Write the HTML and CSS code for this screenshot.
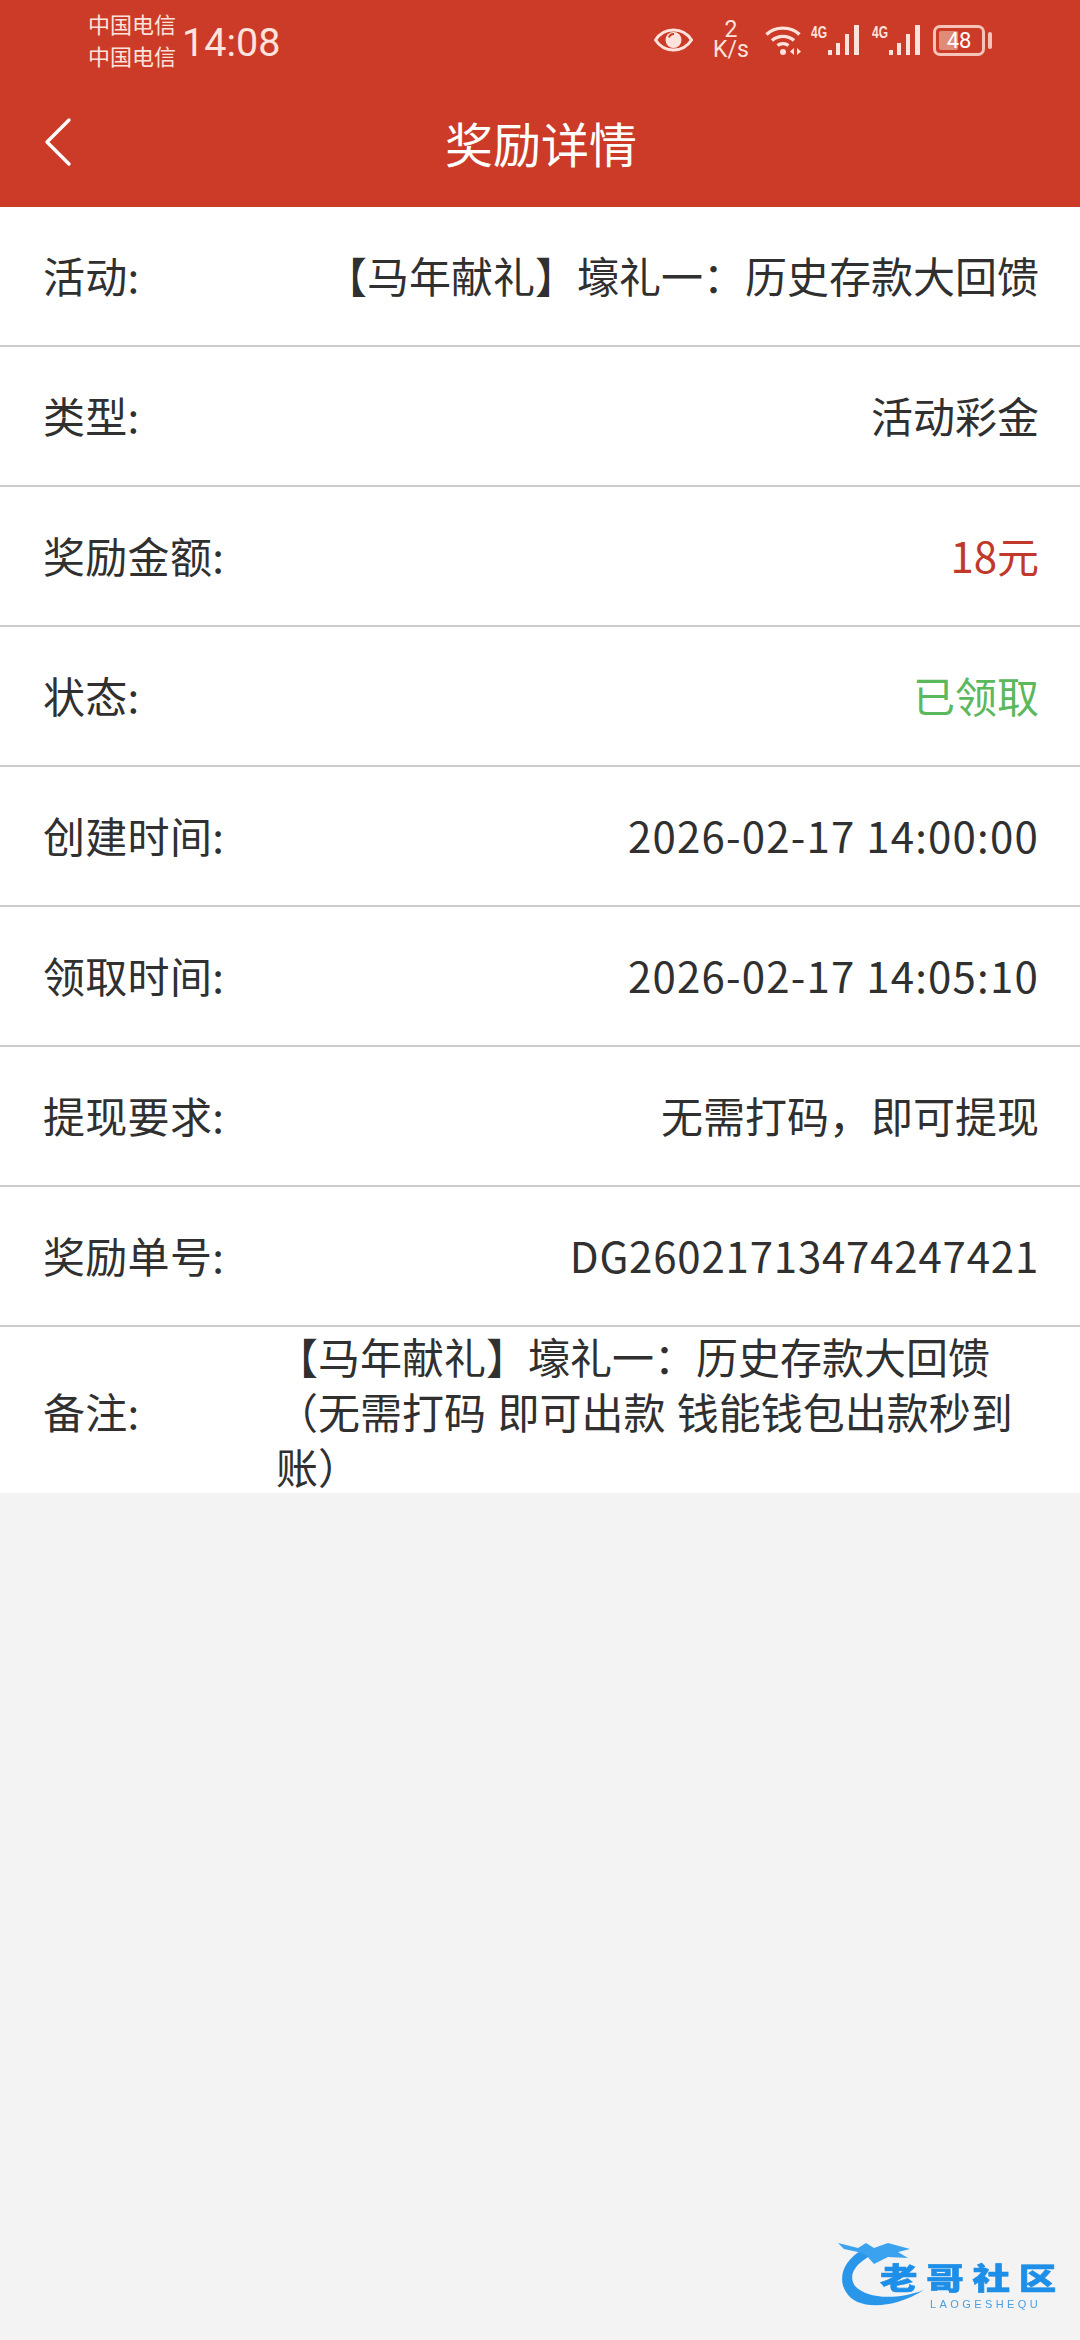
FILE: index.html
```html
<!DOCTYPE html>
<html lang="zh-CN">
<head>
  <meta charset="UTF-8" />
  <meta name="viewport" content="width=device-width, initial-scale=1" />
  <title>奖励详情</title>
  <link rel="stylesheet" href="styles.css">
</head>
<body>
  <div class="top">
    <div class="status-bar">
      <div class="carrier">
        <span>中国电信</span>
        <span>中国电信</span>
      </div>
      <div class="clock">14:08</div>
      <div class="status-icons">
        <svg class="ico-eye" width="39" height="24" viewBox="0 0 39 24">
          <path d="M1.5 12C6 5 12 2 19.5 2S33 5 37.5 12C33 19 27 22 19.5 22S6 19 1.5 12Z" fill="none" stroke="#fde3dc" stroke-width="3"/>
          <circle cx="19.5" cy="12" r="8" fill="#fde3dc"/>
          <path d="M15 9.5a5 5 0 0 1 5-3.5" fill="none" stroke="#cb3b28" stroke-width="2"/>
        </svg>
        <div class="net-speed"><span class="speed-num">2</span><span>K/s</span></div>
        <svg class="ico-wifi" width="38" height="30" viewBox="0 0 38 30">
          <path d="M1.5 9.5C10 1 26 1 34.5 9.5" fill="none" stroke="#fde3dc" stroke-width="3.4"/>
          <path d="M7 15.5C13 10 23 10 29 15.5" fill="none" stroke="#fde3dc" stroke-width="3.4"/>
          <path d="M12.5 20.5C15.5 18 20.5 18 23.5 20.5" fill="none" stroke="#fde3dc" stroke-width="3.2"/>
          <circle cx="18" cy="27" r="3" fill="#fde3dc"/>
          <path d="M29 23v7l-4-3.5ZM32 23v7l4-3.5Z" fill="#fde3dc"/>
        </svg>
        <svg class="ico-signal" width="49" height="30" viewBox="0 0 49 30">
          <text x="0" y="13" class="sig-label" textLength="16" lengthAdjust="spacingAndGlyphs">4G</text>
          <rect x="17" y="25" width="4" height="5" fill="#fde3dc"/>
          <rect x="25" y="18" width="4" height="12" fill="#fde3dc"/>
          <rect x="34" y="9" width="4" height="21" fill="#fde3dc"/>
          <rect x="43" y="0" width="5" height="30" fill="#fde3dc"/>
        </svg>
        <svg class="ico-signal" width="49" height="30" viewBox="0 0 49 30">
          <text x="0" y="13" class="sig-label" textLength="16" lengthAdjust="spacingAndGlyphs">4G</text>
          <rect x="17" y="25" width="4" height="5" fill="#fde3dc"/>
          <rect x="25" y="18" width="4" height="12" fill="#fde3dc"/>
          <rect x="34" y="9" width="4" height="21" fill="#fde3dc"/>
          <rect x="43" y="0" width="5" height="30" fill="#fde3dc"/>
        </svg>
        <div class="battery">
          <div class="battery-body">
            <div class="battery-fill"></div>
            <span class="battery-num">48</span>
          </div>
          <div class="battery-nub"></div>
        </div>
      </div>
    </div>
    <div class="title-bar">
      <svg class="back" width="30" height="50" viewBox="0 0 30 50">
        <path d="M26 3L4 25L26 47" fill="none" stroke="#fff" stroke-width="3.4" stroke-linecap="round" stroke-linejoin="round"/>
      </svg>
      <h1>奖励详情</h1>
    </div>
  </div>

  <div class="detail-list">
    <div class="row">
      <span class="label">活动:</span>
      <span class="value">【马年献礼】壕礼一&#xFF1A;历史存款大回馈</span>
    </div>
    <div class="row">
      <span class="label">类型:</span>
      <span class="value">活动彩金</span>
    </div>
    <div class="row">
      <span class="label">奖励金额:</span>
      <span class="value red">18元</span>
    </div>
    <div class="row">
      <span class="label">状态:</span>
      <span class="value green">已领取</span>
    </div>
    <div class="row">
      <span class="label">创建时间:</span>
      <span class="value date">2026-02-17 14:00:00</span>
    </div>
    <div class="row">
      <span class="label">领取时间:</span>
      <span class="value date">2026-02-17 14:05:10</span>
    </div>
    <div class="row">
      <span class="label">提现要求:</span>
      <span class="value">无需打码&#xFF0C;即可提现</span>
    </div>
    <div class="row">
      <span class="label">奖励单号:</span>
      <span class="value order-no">DG26021713474247421</span>
    </div>
    <div class="row row-note">
      <span class="label">备注:</span>
      <span class="note">【马年献礼】壕礼一&#xFF1A;历史存款大回馈&#xFF08;无需打码 即可出款 钱能钱包出款秒到账&#xFF09;</span>
    </div>
  </div>

  <!-- 水印 -->
  <div class="watermark">
    <svg width="110" height="72" viewBox="0 0 110 72">
      <path d="M24 12C6 22 -1 40 8 54C18 72 54 72 86 52C56 63 28 60 17 48C10 38 16 26 34 17Z" fill="#2a96ea"/>
      <path d="M0 5L20 10L28 5L36 10L50 5L72 11L60 14L70 20L50 19L36 26L28 17L20 14L6 11Z" fill="#3aa2ee"/>
    </svg>
    <div class="wm-name">老哥社区</div>
    <div class="wm-sub">LAOGESHEQU</div>
  </div>
</body>
</html>
```

FILE: styles.css
```css
* {
  box-sizing: border-box;
}

html, body {
  margin: 0;
  padding: 0;
}

body {
  width: 1080px;
  height: 2340px;
  background: #f3f3f3;
  color: #303030;
  font-family: "Noto Sans CJK SC", "Noto Sans", sans-serif;
  overflow: hidden;
  position: relative;
}

.top {
  height: 207px;
  background: #cb3b28;
  color: #fff;
}

.status-bar {
  height: 80px;
  display: flex;
  align-items: center;
  padding: 0 88px;
  color: #fde3dc;
}

.carrier {
  display: flex;
  flex-direction: column;
  font-size: 22px;
  line-height: 32px;
  margin-bottom: 2px;
}

.clock {
  font-family: Roboto, sans-serif;
  font-size: 39.5px;
  margin-left: 6px;
  margin-top: 5px;
}

.status-icons {
  display: flex;
  align-items: center;
  margin-left: auto;
}

.ico-eye {
  margin-right: 20px;
}

.net-speed {
  width: 36px;
  margin-right: 16px;
  display: flex;
  flex-direction: column;
  align-items: center;
  font-family: Roboto, sans-serif;
  font-size: 23px;
  line-height: 20px;
}

.ico-wifi {
  margin-right: 8px;
}

.ico-signal {
  margin-right: 12px;
}

.sig-label {
  font-family: "Liberation Sans", sans-serif;
  font-size: 16px;
  font-weight: 700;
  fill: #fde3dc;
}

.battery {
  display: flex;
  align-items: center;
  gap: 3px;
}

.battery-body {
  width: 52px;
  height: 31px;
  border: 3px solid #f6c3b8;
  border-radius: 7px;
  padding: 3px;
  position: relative;
}

.battery-fill {
  width: 48%;
  height: 100%;
  background: #e08a7a;
  border-radius: 2px;
}

.battery-num {
  position: absolute;
  left: 0;
  right: 0;
  top: -3px;
  text-align: center;
  font-family: Roboto, sans-serif;
  font-size: 22px;
  line-height: 31px;
  color: #fff;
}

.battery-nub {
  width: 4px;
  height: 17px;
  border-radius: 2px;
  background: #f6c3b8;
}

.title-bar {
  height: 127px;
  display: flex;
  align-items: center;
  justify-content: center;
  position: relative;
  padding-bottom: 4px;
}

.back {
  position: absolute;
  left: 43px;
  top: 37px;
}

.title-bar h1 {
  margin: 0;
  font-size: 48px;
  font-weight: 400;
  margin-left: 2px;
}

.detail-list {
  background: #fff;
}

.row {
  height: 140px;
  display: flex;
  align-items: center;
  justify-content: space-between;
  padding: 0 41px 4px 43px;
  border-bottom: 2px solid #ccc;
  font-size: 42px;
}

.label {
  flex-shrink: 0;
  letter-spacing: 0.3px;
}

.value {
  text-align: right;
}

.date {
  letter-spacing: 1.2px;
}

.order-no {
  letter-spacing: 0.8px;
}

.red {
  color: #c0392b;
}

.green {
  color: #5cb85c;
}

.row-note {
  height: 166px;
  border-bottom: 0;
  justify-content: flex-start;
  padding: 0 40px 0 43px;
}

.row-note .label {
  width: 233px;
}

.note {
  line-height: 55px;
  word-spacing: 2px;
}

.watermark {
  position: absolute;
  left: 838px;
  top: 2238px;
  width: 224px;
  height: 72px;
  filter: blur(0.7px);
}

.wm-name {
  position: absolute;
  left: 42px;
  top: 22px;
  font-size: 30px;
  line-height: 32px;
  font-weight: 900;
  letter-spacing: 7px;
  white-space: nowrap;
  color: #1e8fe8;
  -webkit-text-stroke: 0.6px #1e8fe8;
  transform: scaleX(1.25);
  transform-origin: left center;
}

.wm-sub {
  position: absolute;
  left: 92px;
  top: 60px;
  font-family: "Liberation Sans", sans-serif;
  font-size: 11px;
  line-height: 12px;
  letter-spacing: 3.4px;
  color: #4a9fe0;
}
```
